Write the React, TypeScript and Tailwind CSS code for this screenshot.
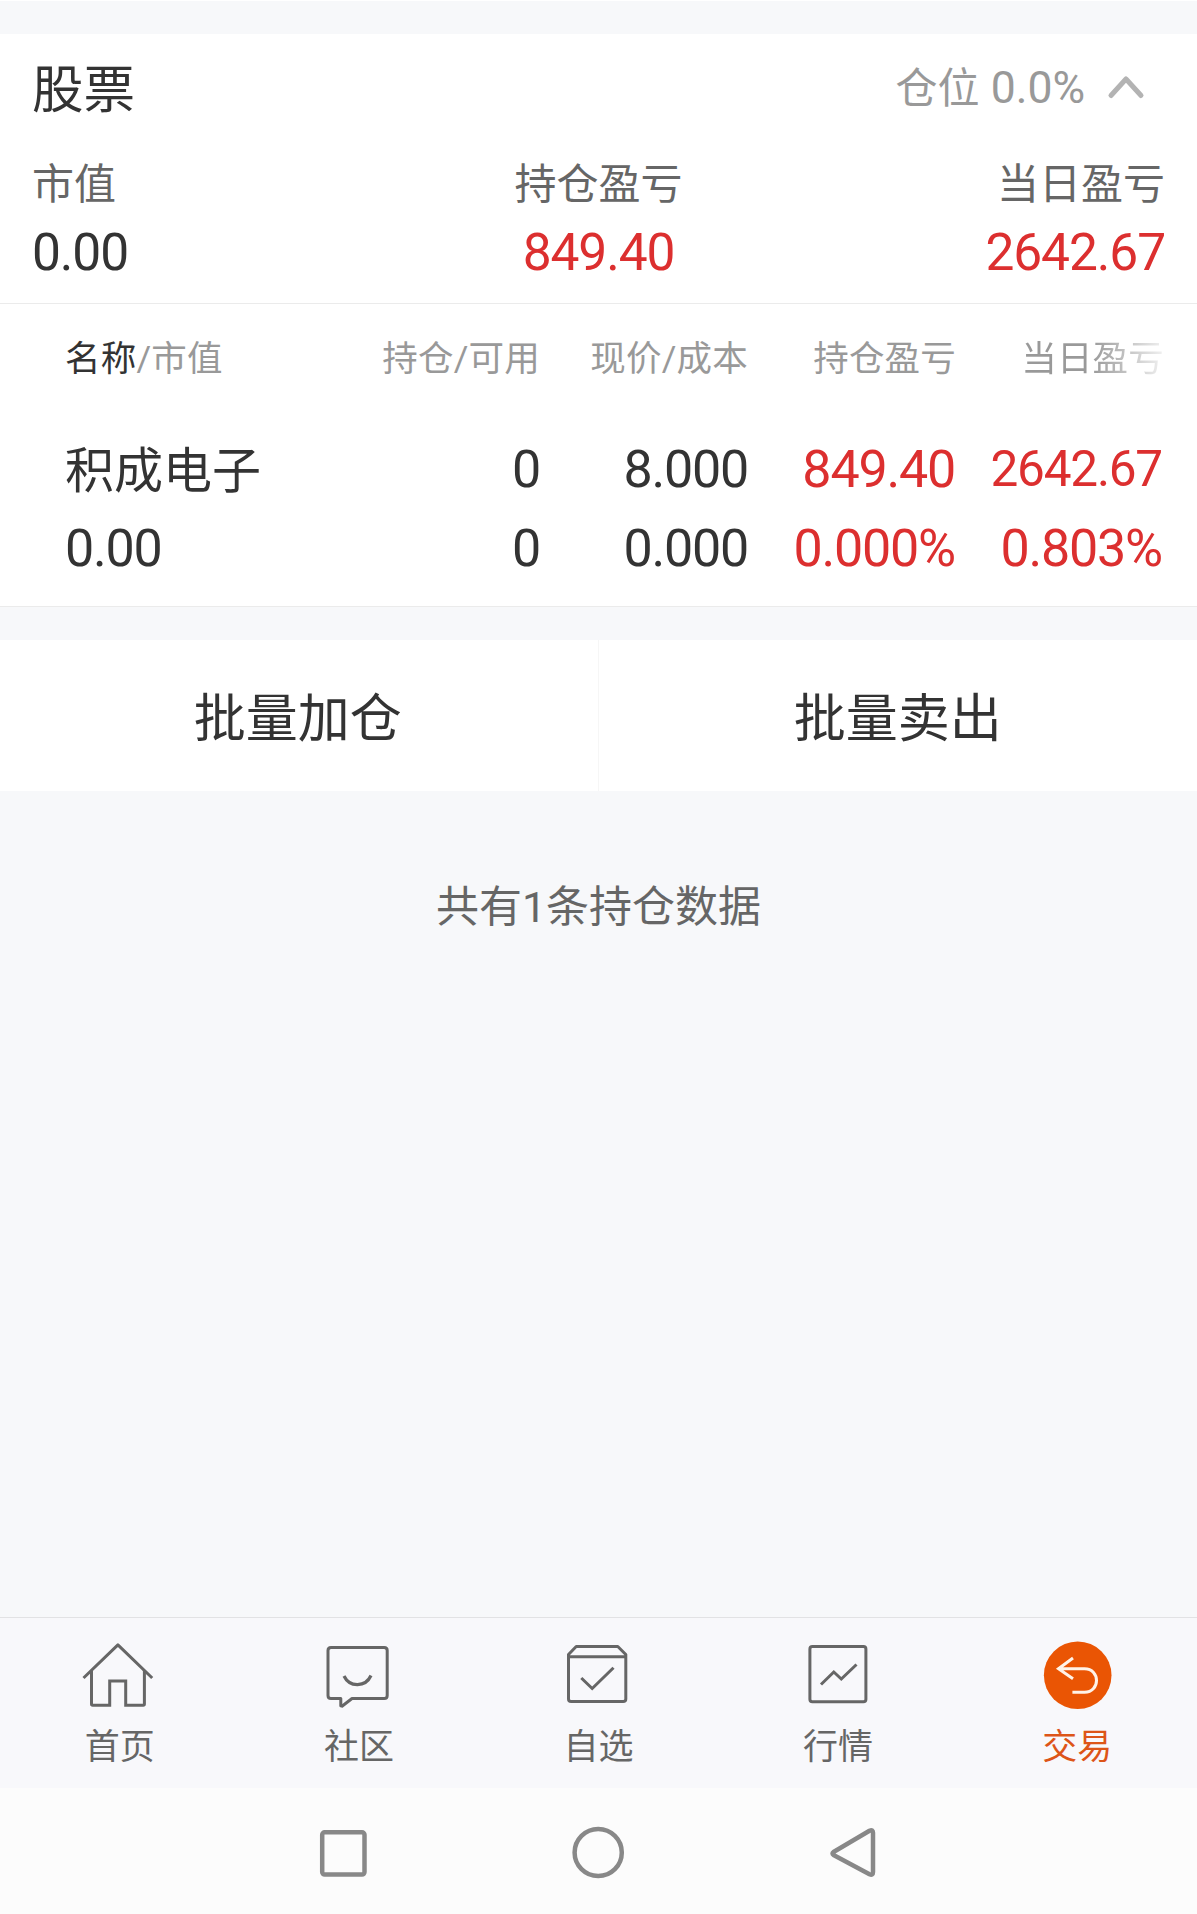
import type { ReactNode } from "react";

type Cell = { top: string; bottom: string; className?: string };

const summary = [
  { label: "市值", value: "0.00", className: "text-left text-[#333]" },
  { label: "持仓盈亏", value: "849.40", className: "text-center text-[#dc2f2f]" },
  { label: "当日盈亏", value: "2642.67", className: "text-right text-[#dc2f2f]" },
];

const cells: Cell[] = [
  { top: "0", bottom: "0" },
  { top: "8.000", bottom: "0.000" },
  { top: "849.40", bottom: "0.000%", className: "text-[#dc2f2f]" },
];

const NavIcon = ({ children }: { children: ReactNode }) => (
  <svg
    width="72"
    height="72"
    viewBox="0 0 72 72"
    fill="none"
    stroke="currentColor"
    strokeWidth="3"
    className="overflow-visible"
  >
    {children}
  </svg>
);

const tabs = [
  {
    name: "首页",
    icon: (
      <NavIcon>
        <path d="M-0.5 39 33.900 5.800 68.200 39" strokeLinejoin="round" />
        <path d="M7.500 31V65q0 1.200 1.200 1.200H25.700V42H41.700V66.200H59.200q1.200 0 1.200-1.200V31" />
      </NavIcon>
    ),
  },
  {
    name: "社区",
    icon: (
      <NavIcon>
        <path
          d="M8 8.500H61.200q3 0 3 3V56.500q0 3-3 3H29L19 67.200 17.800 66.800V59.500H8q-3 0-3-3V11.500q0-3 3-3z"
          strokeLinejoin="round"
        />
        <path d="M21 37C26.500 48.500 42.500 48.500 48 36.500" strokeWidth="3.200" />
      </NavIcon>
    ),
  },
  {
    name: "自选",
    icon: (
      <NavIcon>
        <path
          d="M6.500 15.500 14.200 7.500H55.800L63.800 15.500V60q0 2.600-2.600 2.600H9.100q-2.600 0-2.600-2.600z"
          strokeLinejoin="round"
        />
        <path d="M6.500 17.700H63.800" />
        <path d="M19.300 39 30.200 49.500 51.500 28.700" />
      </NavIcon>
    ),
  },
  {
    name: "行情",
    icon: (
      <NavIcon>
        <rect x="7.900" y="7.500" width="56" height="55.300" rx="2.500" />
        <path d="M19 45.500 31.800 33 39.300 40 54.500 25.500" />
      </NavIcon>
    ),
  },
  {
    name: "交易",
    active: true,
    icon: (
      <NavIcon>
        <circle cx="36.700" cy="36.300" r="33.800" fill="#ea5504" stroke="none" />
        <path
          d="M32 19 17.500 29.700 32 39.700M17.500 29.700H43.500C59.500 29.700 59.500 53.300 43.500 53.300H31.400"
          stroke="#fff3e8"
        />
      </NavIcon>
    ),
  },
];

const App = () => {
  return (
    <div className="flex h-[1914px] w-[1197px] flex-col overflow-hidden bg-[#f7f8fa] font-['Roboto','Noto_Sans_CJK_SC',sans-serif] text-[#333]">
      <div className="h-[34px] shrink-0 border-t border-white" />

      <section className="shrink-0 border-b border-[#ebebeb] bg-white">
        <div className="flex h-[108px] items-center justify-between pl-8 pr-[52px]">
          <h1 className="pt-1.5 text-[51.5px] leading-none">股票</h1>
          <div className="flex items-center text-[#999]">
            <span className="text-[42px] leading-none">
              仓位
              <span className="text-[44.5px]"> 0.0%</span>
            </span>
            <svg
              width="38"
              height="26"
              viewBox="0 0 38 26"
              fill="none"
              stroke="#b3b3b3"
              strokeWidth="5"
              strokeLinecap="round"
              strokeLinejoin="round"
              className="-mt-0.5 ml-[22px]"
            >
              <path d="M4 21.500 19 5 34 21.500" />
            </svg>
          </div>
        </div>
        <div className="grid grid-cols-3 px-8 pb-[22px]">
          {summary.map((item) => (
            <div key={item.label} className={item.className}>
              <div className="h-[82px] pt-0.5 text-[42px] leading-[82px] text-[#666]">
                {item.label}
              </div>
              <div className="text-[51.5px] leading-[57px] tracking-[-1.1px]">
                {item.value}
              </div>
            </div>
          ))}
        </div>
      </section>

      <section className="shrink-0 border-b border-[#ebebeb] bg-white pb-[37px] pl-[65px]">
        <div className="grid grid-cols-[282px_193px_208px_208px_208px] pt-[3px] text-right text-[35.5px] leading-[104px] tracking-[0.2px] text-[#999]">
          <div className="text-left">
            <span className="text-[#333]">名称</span>/市值
          </div>
          <div>持仓/可用</div>
          <div>现价/成本</div>
          <div>持仓盈亏</div>
          <div className="bg-linear-to-r from-[#999] from-65% to-white to-105% bg-clip-text text-transparent">
            当日盈亏
          </div>
        </div>
        <div className="grid grid-cols-[282px_193px_208px_207px_207px] text-right text-[52px] tracking-[-1.2px]">
          <div className="text-left">
            <div className="h-[117px] pt-0.5 text-[49px] leading-[117px] tracking-normal">
              积成电子
            </div>
            <div className="leading-[41px]">0.00</div>
          </div>
          {cells.map((cell, i) => (
            <div key={i} className={cell.className}>
              <div className="leading-[117px]">{cell.top}</div>
              <div className="leading-[41px]">{cell.bottom}</div>
            </div>
          ))}
          <div className="text-[#dc2f2f]">
            <div className="h-[117px] text-[49.5px] leading-[117px]">2642.67</div>
            <div className="leading-[41px]">0.803%</div>
          </div>
        </div>
      </section>

      <div className="mt-[33px] grid h-[151px] shrink-0 grid-cols-2 bg-white text-[52px]">
        <button className="border-r border-[#f6f6f6] pr-0.5 pt-2">批量加仓</button>
        <button className="pt-2">批量卖出</button>
      </div>

      <p className="pt-[86px] text-center text-[43px] leading-[60px] text-[#666]">
        共有1条持仓数据
      </p>

      <nav className="mt-auto grid h-[171px] shrink-0 grid-cols-5 border-t border-[#e2e2e4] bg-[#f8f8fb] pt-[21px]">
        {tabs.map((tab) => (
          <div
            key={tab.name}
            className={
              tab.active
                ? "flex flex-col items-center text-[#dd5518]"
                : "flex flex-col items-center text-[#666]"
            }
          >
            {tab.icon}
            <span className="mt-4 text-[35px] leading-[42px]">{tab.name}</span>
          </div>
        ))}
      </nav>

      {/* system navigation */}
      <div className="flex h-[126px] shrink-0 items-start justify-center bg-[#fcfcfc] pt-9 text-[#888]">
        <svg
          width="600"
          height="60"
          viewBox="0 0 600 60"
          fill="none"
          stroke="currentColor"
          strokeWidth="4.500"
        >
          <rect x="23.200" y="8.300" width="42.300" height="42.300" rx="2.500" />
          <circle cx="299.200" cy="28.500" r="23.600" />
          <path
            d="M534.500 28 570.500 6.800q3.500-1.500 3.500 2V48q0 3.800-3.500 2.300L534.500 31q-2-1.500 0-3z"
            strokeLinejoin="round"
          />
        </svg>
      </div>
    </div>
  );
};

export default App;
